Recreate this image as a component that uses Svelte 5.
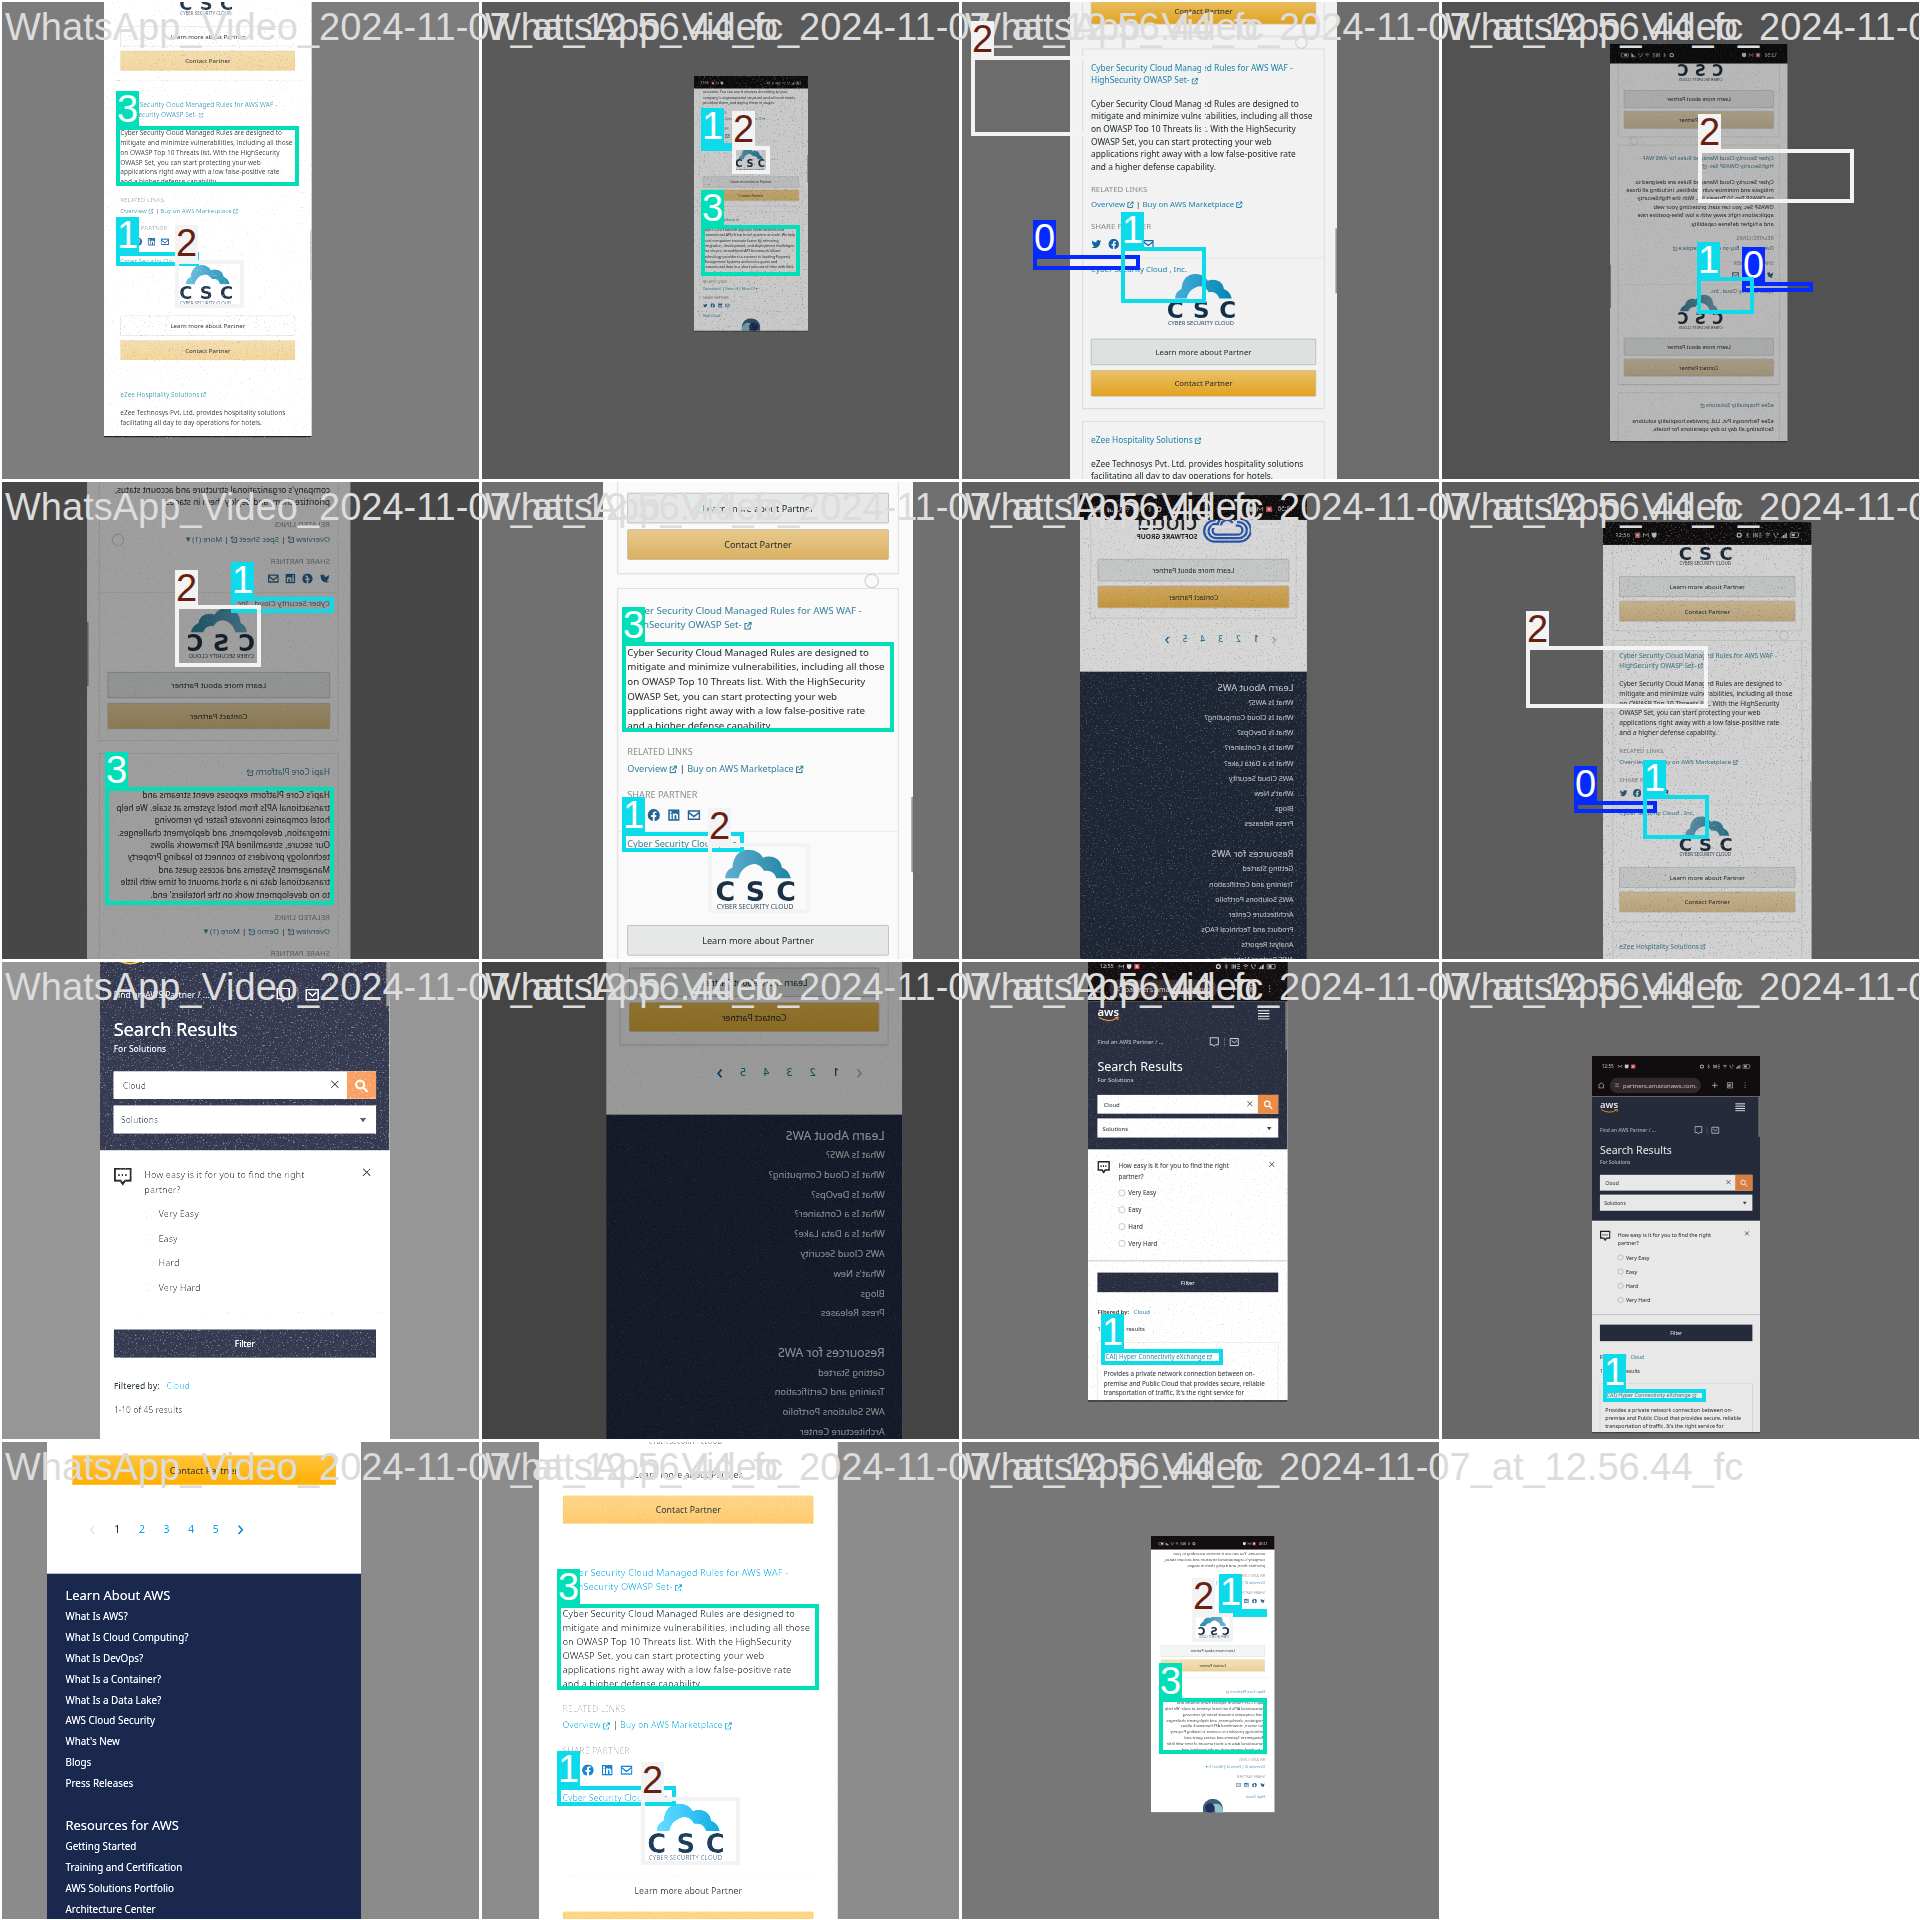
<script lang="ts">
  type Box = { cls: number; x: number; y: number; w: number; h: number };
  type Frame = {
    page: string;
    x: number;
    y: number;
    k: number;
    flip?: boolean;
    quiet?: boolean;
    light: number;
    sat: number;
    grain: number;
    tones?: string;
    boxes: Box[];
  };

  const caption = 'WhatsApp_Video_2024-11-07_at_12.56.44_fc';
  const PAGE_W = 510;
  const PAGE_H = 1144;

  const box = (cls: number, x: number, y: number, w: number, h: number): Box => ({ cls, x, y, w, h });

  const frames: Frame[] = [
    { page: 'waf', x: 104, y: -28, k: 0.407, light: 1.1, sat: 0.75, grain: 0.3, tones: '--gold: #e4c88e; --amber: #e6c27a', boxes: [box(3, 116, 126, 183, 60), box(1, 116, 252, 83, 14), box(2, 175, 260, 69, 48)] },
    { page: 'hapi', x: 214, y: 76, k: 0.2235, light: 0.79, sat: 0.8, grain: 0.35, tones: '--gold: #f8cc76; --amber: #f2c468', boxes: [box(1, 221, 143, 35, 8), box(2, 252, 146, 38, 28), box(3, 221, 225, 99, 51)] },
    { page: 'waf', x: 110, y: -103, k: 0.5235, light: 0.95, sat: 1.1, grain: 0, boxes: [box(2, 11, 56, 234, 80), box(0, 73, 255, 107, 15), box(1, 161, 247, 85, 56)] },
    { page: 'waf', x: 170, y: 44, k: 0.3484, flip: true, light: 0.72, sat: 0.5, grain: 0.15, tones: '--gold: #f3d694; --amber: #e8c884', boxes: [box(2, 258, 149, 156, 54), box(0, 302, 282, 71, 10), box(1, 257, 277, 57, 37)] },
    { page: 'hapi', x: 87, y: -40, k: 0.517, flip: true, light: 0.62, sat: 0.7, grain: 0.15, tones: '--gold: #f8d690; --amber: #ecc268', boxes: [box(1, 231, 117, 103, 16), box(2, 175, 125, 86, 62), box(3, 105, 307, 229, 118)] },
    { page: 'waf', x: 123, y: -68, k: 0.608, light: 0.98, sat: 0.8, grain: 0, tones: '--gold: #f4cd80; --amber: #e9b34e', boxes: [box(3, 142, 162, 272, 90), box(1, 142, 352, 122, 20), box(2, 228, 363, 102, 70)] },
    { page: 'footer', x: 120, y: 15, k: 0.445, flip: true, light: 0.84, sat: 1, grain: 0.3, tones: '--gold: #f3c670; --amber: #eab044; --deep: #242c3e', boxes: [] },
    { page: 'waf', x: 163, y: 42, k: 0.409, light: 0.82, sat: 0.65, grain: 0.35, tones: '--gold: #fad694; --amber: #f0c478', boxes: [box(2, 86, 166, 182, 62), box(0, 134, 321, 83, 12), box(1, 203, 315, 66, 44)] },
    { page: 'search', x: 100, y: -93, k: 0.568, light: 1.32, sat: 1, grain: 0.3, tones: '--orange: #bd794a; --navy: #292c3d', boxes: [] },
    { page: 'footer', x: 126, y: -76, k: 0.581, flip: true, light: 0.6, sat: 1, grain: 0.12, tones: '--gold: #ecc050; --amber: #e8b038', boxes: [] },
    { page: 'search', x: 128, y: -6, k: 0.3914, light: 1, sat: 1, grain: 0.15, boxes: [box(1, 141, 389, 122, 16)] },
    { page: 'search', x: 152, y: 96, k: 0.33, light: 0.91, sat: 1, grain: 0, boxes: [box(1, 163, 429, 103, 13)] },
    { page: 'footer', x: 47, y: -111, k: 0.616, light: 1.22, sat: 1, grain: 0, tones: '--gold: #d1a232; --amber: #d18f00; --deep: #16213f; --link: #0f82c4', boxes: [] },
    { page: 'waf', x: 59, y: -58, k: 0.5853, quiet: true, light: 1.23, sat: 1, grain: 0.12, tones: '--gold: #cfae70; --amber: #cfa45a', boxes: [box(3, 77, 164, 262, 86), box(1, 77, 346, 119, 20), box(2, 161, 357, 99, 68)] },
    { page: 'hapi', x: 191, y: 96, k: 0.2425, flip: true, quiet: true, light: 1.04, sat: 0.7, grain: 0, tones: '--gold: #f2d898; --amber: #eac87c', boxes: [box(1, 259, 169, 48, 8), box(2, 232, 173, 41, 29), box(3, 199, 258, 108, 56)] }
  ];

  const wafTitle = ['Cyber Security Cloud Managed Rules for AWS WAF -', 'HighSecurity OWASP Set-'];
  const wafBody = [
    'Cyber Security Cloud Managed Rules are designed to',
    'mitigate and minimize vulnerabilities, including all those',
    'on OWASP Top 10 Threats list. With the HighSecurity',
    'OWASP Set, you can start protecting your web',
    'applications right away with a low false-positive rate',
    'and a higher defense capability.'
  ];
  const ezeeBody = ['eZee Technosys Pvt. Ltd. provides hospitality solutions', 'facilitating all day to day operations for hotels.'];
  const managerBody = [
    'accounts. You can use it services according to your',
    "company's organizational structure and account status,",
    'prioritize them, and deploy them in stages.'
  ];
  const hapiBody = [
    "Hapi's Core Platform exposes event streams and",
    'transactional APIs from hotel systems at scale. We help',
    'hotel companies innovate faster by removing',
    'integration, development, and deployment challenges.',
    'Our secure, streamlined API framework allows',
    'technology providers to connect to leading Property',
    'Management Systems and access guest and',
    'transactional data in a short amount of time with little',
    "to no development work on the hoteliers' end."
  ];
  const exchangeBody = [
    'Provides a private network connection between on-',
    'premise and Public Cloud that provides secure, reliable',
    "transportation of traffic. It's the right service for",
    'the AWS/Azure Cloud customers for digital infrastructure'
  ];
  const learn = ['What Is AWS?', 'What Is Cloud Computing?', 'What Is DevOps?', 'What Is a Container?', 'What Is a Data Lake?', 'AWS Cloud Security', "What's New", 'Blogs', 'Press Releases'];
  const resources = ['Getting Started', 'Training and Certification', 'AWS Solutions Portfolio', 'Architecture Center', 'Product and Technical FAQs', 'Analyst Reports', 'AWS Partner Network'];
  const ratings = ['Very Easy', 'Easy', 'Hard', 'Very Hard'];
</script>

{#snippet ext()}
  <svg class="ext" viewBox="0 0 14 14" aria-hidden="true"><path d="M11 8v5H1.500V3H6M8 1.500h4.500V6M12.500 1.500 5.500 8.500" /></svg>
{/snippet}

{#snippet lines(text: string[])}
  <p class="copy">{#each text as line}<span>{line}</span>{/each}</p>
{/snippet}

{#snippet share()}
  <h4>SHARE PARTNER</h4>
  <div class="social">
    <a href="#twitter" aria-label="Twitter"><svg viewBox="0 0 24 24"><path d="M23 5a9 9 0 0 1-2.600.7 4.500 4.500 0 0 0 2-2.500 9 9 0 0 1-2.900 1.100A4.600 4.600 0 0 0 11.700 8.500 13 13 0 0 1 2.200 3.700a4.600 4.600 0 0 0 1.400 6.100 4.500 4.500 0 0 1-2-.6 4.600 4.600 0 0 0 3.600 4.500 4.600 4.600 0 0 1-2 .1 4.600 4.600 0 0 0 4.300 3.200A9.200 9.200 0 0 1 .7 19 13 13 0 0 0 20.700 7.400 9 9 0 0 0 23 5z" /></svg></a>
    <a href="#facebook" aria-label="Facebook"><svg viewBox="0 0 24 24"><path d="M24 12a12 12 0 1 0-13.900 11.900v-8.400H7V12h3.100V9.400c0-3 1.800-4.700 4.500-4.700 1.300 0 2.700.2 2.700.2v3h-1.500c-1.500 0-2 .9-2 1.900V12h3.400l-.5 3.500h-2.900v8.400A12 12 0 0 0 24 12z" /></svg></a>
    <a href="#linkedin" aria-label="LinkedIn"><svg viewBox="0 0 24 24"><path fill-rule="evenodd" d="M1 1h22v22H1zM4 9v11h3.500V9zM5.700 4a2 2 0 1 0 0 4 2 2 0 0 0 0-4zM10 9v11h3.500v-6c0-3 3.500-3 3.500 0v6h3.300v-7c0-5-5-5.500-6.800-2.500V9z" /></svg></a>
    <a href="#mail" aria-label="Email"><svg viewBox="0 0 24 24"><path class="line" d="M1 4h22v16H1zM2 7l10 8L22 7" /></svg></a>
  </div>
{/snippet}

{#snippet cscLogo()}
  <svg class="csc" viewBox="0 0 136 98" role="img" aria-label="Cyber Security Cloud">
    <path fill="url(#cloud)" d="M14 47C14 38 19 32 26 29 27 10 38 0 52 0c11 0 20 5 24 13 15-6 30 2 31 16 8 3 13 9 15 18H98C96 38 88 33 78 35 73 26 64 21 55 25 44 29 38 37 36 47z" />
    <text class="letters" x="-2 48 98" y="84">CSC</text>
    <text class="tiny" x="0" y="97">CYBER SECURITY CLOUD</text>
  </svg>
{/snippet}

{#snippet actions()}
  <div class="actions">
    <button class="learn">Learn more about Partner</button>
    <button class="contact">Contact Partner</button>
  </div>
{/snippet}

{#snippet cscPartner()}
  <div class="partner">
    <a href="#csc">Cyber Security Cloud , Inc.</a>
    {@render cscLogo()}
    {@render actions()}
  </div>
{/snippet}

{#snippet statusBar(late: boolean)}
  <div class="status">
    <span>{late ? '12:55' : '12:56'}</span>
    <svg class:last={late} viewBox="0 0 14 14"><rect width="14" height="14" rx="3" fill="#e0505a" /><rect x="4" y="4" width="6" height="6" fill="#f6c9cb" /></svg>
    <svg viewBox="0 0 14 14"><path fill="none" stroke="#cfcfcf" stroke-width="2" d="M1 12V3l6 5 6-5v9" /></svg>
    <svg viewBox="0 0 14 14"><path fill="#dcdcdc" d="M1 1h12v6q0 5-6 7-6-2-6-7z" /></svg>
    <i></i>
    <svg viewBox="0 0 14 14"><circle cx="7" cy="7" r="5" fill="none" stroke="#dcdcdc" stroke-width="3" /></svg>
    <svg viewBox="0 0 14 14"><path fill="none" stroke="#bdbdbd" stroke-width="1.500" d="M4 4l6 6-3 3V1l3 3-6 6" /></svg>
    <svg class="wide" viewBox="0 0 24 14"><path fill="none" stroke="#bdbdbd" stroke-width="2" d="M2 1v12M6 13V2l5 10V1M15 2h7M15 7h7M15 12h7" /></svg>
    <svg viewBox="0 0 14 14"><path fill="none" stroke="#cfcfcf" stroke-width="2" d="M1 5q6-5 12 0M4 8q3-3 6 0M7 11v2" /></svg>
    <svg viewBox="0 0 14 14"><path fill="none" stroke="#cfcfcf" stroke-width="2" d="M2 1v4q1 7 8 8M9 1l4 3-4 3" /></svg>
    <svg viewBox="0 0 14 14"><path fill="#cfcfcf" d="M0 10h3v4H0zM4 7h3v7H4zM8 4h3v10H8zM12 1h2v13h-2z" /></svg>
    <svg class="wide" viewBox="0 0 24 14"><rect x="1" y="1" width="21" height="12" rx="3" fill="none" stroke="#cfcfcf" stroke-width="2" /><path fill="#cfcfcf" d="M5 4h8v6H5z" /></svg>
  </div>
{/snippet}

{#snippet waf(quiet: boolean)}
  {@render statusBar(false)}
  <div class="view">
    <div class="scroll csc-tail">
      <section class="card tail">{@render cscLogo()}{@render actions()}</section>
      <section class="card">
        <h3><a href="#waf">{#each wafTitle as line, i}<span>{line}{#if i === 1}&nbsp;{@render ext()}{/if}</span>{/each}</a></h3>
        {@render lines(wafBody)}
        <h4>RELATED LINKS</h4>
        <p class="links"><a href="#overview">Overview {@render ext()}</a> | <a href="#market">Buy on AWS Marketplace {@render ext()}</a></p>
        {@render share()}
        {@render cscPartner()}
      </section>
      <section class="card">
        <h3><a href="#ezee">eZee Hospitality Solutions {@render ext()}</a></h3>
        {@render lines(ezeeBody)}
      </section>
    </div>
    {#if !quiet}
      <div class="ring low"></div>
      <div class="thumb"></div>
    {/if}
  </div>
{/snippet}

{#snippet hapi(quiet: boolean)}
  {@render statusBar(false)}
  <div class="view">
    <div class="scroll">
      <section class="card tail manager">
        {@render lines(managerBody)}
        <h4>RELATED LINKS</h4>
        <p class="links"><a href="#overview">Overview {@render ext()}</a> | <a href="#spec">Spec Sheet {@render ext()}</a> | <a href="#more">More (1)▼</a></p>
        {@render share()}
        {@render cscPartner()}
      </section>
      <section class="card">
        <h3><a href="#hapi">Hapi Core Platform {@render ext()}</a></h3>
        {@render lines(hapiBody)}
        <h4>RELATED LINKS</h4>
        <p class="links"><a href="#overview">Overview {@render ext()}</a> | <a href="#demo">Demo {@render ext()}</a> | <a href="#more">More (1)▼</a></p>
        {@render share()}
        <div class="partner">
          <a href="#hapicloud">Hapi Cloud</a>
          <svg class="dome" viewBox="0 0 84 84" role="img" aria-label="Hapi Cloud"><circle cx="42" cy="42" r="42" fill="#2f5f86" /><path d="M0 44Q10 14 42 22L30 60H0z" fill="#7fc0cc" /><circle cx="54" cy="38" r="20" fill="#1d2c6b" /></svg>
        </div>
      </section>
    </div>
    {#if !quiet}
      <div class="ring high"></div>
      <div class="thumb early"></div>
    {/if}
  </div>
{/snippet}

{#snippet footer()}
  {@render statusBar(false)}
  <div class="view">
    <div class="scroll">
      <section class="card tail cloud-card">
        <div class="cloud-logo">
          <svg viewBox="0 0 108 78" aria-hidden="true"><g fill="none" stroke="#2c62c8" stroke-width="5"><path d="M31 23H26a24 24 0 0 0 0 52H80a24 24 0 0 0 2-48 30 30 0 0 0-56-4" /><path d="M31 31H27a16 16 0 0 0 0 36H79a16 16 0 0 0 0-32H74a22 22 0 0 0-40-8" /><path d="M34 39H29a9 9 0 0 0 0 20H77a9 9 0 0 0 0-18H67a14 14 0 0 0-26-8" /></g></svg>
          <div><b>cloud</b><small>SOFTWARE GROUP</small></div>
        </div>
        {@render actions()}
      </section>
      <nav class="pager">
        <a class="off" href="#prev" aria-label="Previous"><svg viewBox="0 0 14 20"><path d="M10 3 4 10l6 7" /></svg></a>
        <b>1</b>{#each [2, 3, 4, 5] as n}<a href="#page">{n}</a>{/each}
        <a href="#next" aria-label="Next"><svg viewBox="0 0 14 20"><path d="m4 3 6 7-6 7" /></svg></a>
      </nav>
      <footer>
        <h2>Learn About AWS</h2>
        <ul>{#each learn as item}<li><a href="#learn">{item}</a></li>{/each}</ul>
        <h2>Resources for AWS</h2>
        <ul>{#each resources as item}<li><a href="#resources">{item}</a></li>{/each}</ul>
      </footer>
    </div>
  </div>
{/snippet}

{#snippet search(id: number)}
  <div class="chrome">
    {@render statusBar(true)}
    <div class="urlbar">
      <svg viewBox="0 0 20 20"><path d="M3 8l7-6 7 6v10H3z" /></svg>
      <span class="pill"><svg viewBox="0 0 20 20"><path d="M2 5h5M11 5h7M2 14h9M15 14h3M9 2v6M13 11v6" /></svg>partners.amazonaws.com,</span>
      <svg viewBox="0 0 20 20"><path d="M10 1v18M1 10h18" /></svg>
      <svg viewBox="0 0 20 20"><path d="M2 2h16v16H2zM6 7h3v7H6zM12 6v8" /></svg>
      <svg viewBox="0 0 20 20"><path d="M10 1v3M10 8v3M10 15v3" /></svg>
    </div>
  </div>
  <div class="view">
    <header>
      <div class="top">
        <div class="aws"><b>aws</b><svg viewBox="0 0 60 14" aria-hidden="true"><path d="M4 2q24 15 46 2M45 2l8-1-1 8" /></svg></div>
        <button class="burger" aria-label="Menu"><svg viewBox="0 0 30 26"><path d="M0 3h30M0 10h30M0 17h30M0 24h30" /></svg></button>
      </div>
      <div class="crumb">
        <span>Find an AWS Partner / ...</span>
        <svg viewBox="0 0 26 26"><path d="M2 2h21v18h-7l-4 4-3-4H2z" /></svg>
        <i></i>
        <svg viewBox="0 0 26 26"><path d="M2 4h21v18H2zM6 9l7 6 7-6" /></svg>
      </div>
      <h1>Search Results</h1>
      <p>For Solutions</p>
      <form class="find">
        <input aria-label="Search" value="Cloud" />
        <button type="button" class="clear" aria-label="Clear"><svg viewBox="0 0 14 14"><path d="M1 1l12 12M13 1 1 13" /></svg></button>
        <button type="button" class="go" aria-label="Search"><svg viewBox="0 0 24 24"><circle cx="10" cy="10" r="7" /><path d="m15 15 8 8" /></svg></button>
      </form>
      <div class="pick"><select aria-label="Category"><option>Solutions</option></select></div>
    </header>
    <section class="survey">
      <svg class="talk" viewBox="0 0 32 32"><path d="M2 2h28v21H20l-4 6-4-6H2z" /><path d="M8 13h3M14 13h3M20 13h3" /></svg>
      <div>
        <p>How easy is it for you to find the right<br />partner?</p>
        {#each ratings as rating}<label><input type="radio" name="rating-{id}" />{rating}</label>{/each}
      </div>
      <button class="clear" aria-label="Close"><svg viewBox="0 0 14 14"><path d="M1 1l12 12M13 1 1 13" /></svg></button>
    </section>
    <section class="results">
      <button class="filter">Filter</button>
      <p class="by"><b>Filtered by:</b> <a href="#cloud">Cloud</a></p>
      <p class="count">1-10 of 45 results</p>
    </section>
    <section class="card">
      <h3><a href="#hcx">(CAI) Hyper Connectivity eXchange {@render ext()}</a></h3>
      {@render lines(exchangeBody)}
    </section>
    <div class="thumb top-thumb"></div>
  </div>
{/snippet}

<svg class="defs" aria-hidden="true">
  <defs>
    <linearGradient id="cloud"><stop offset="0" stop-color="#52b4de" /><stop offset="1" stop-color="#0b8cb4" /></linearGradient>
    <filter id="dark-specks" x="0" y="0" width="100%" height="100%"><feTurbulence type="fractalNoise" baseFrequency="0.600" numOctaves="2" seed="4" /><feColorMatrix values="0 0 0 0 .2  0 0 0 0 .2  0 0 0 0 .25  9 0 0 0 -5.800" /></filter>
    <filter id="light-specks" x="0" y="0" width="100%" height="100%"><feTurbulence type="fractalNoise" baseFrequency="0.600" numOctaves="2" seed="9" /><feColorMatrix values="0 0 0 0 .7  0 0 0 0 .8  0 0 0 0 .8  0 9 0 0 -5.800" /></filter>
  </defs>
</svg>

<main>
  {#each frames as f, i}
    <figure>
      <div class="photo" style="filter: brightness({f.light}) saturate({f.sat}); {f.tones ?? ''}">
        <div class="phone" class:flip={f.flip} style="left: {f.x}px; top: {f.y}px; width: {PAGE_W * f.k}px; height: {PAGE_H * f.k}px">
          <div class="page" style="transform: scale({f.k})">
            {#if f.page === 'waf'}{@render waf(!!f.quiet)}{:else if f.page === 'hapi'}{@render hapi(!!f.quiet)}{:else if f.page === 'footer'}{@render footer()}{:else}{@render search(i)}{/if}
          </div>
          {#if f.grain}
            <svg class="grain" style="opacity: {f.grain}" aria-hidden="true"><rect width="100%" height="100%" filter="url(#dark-specks)" /><rect width="100%" height="100%" filter="url(#light-specks)" /></svg>
          {/if}
        </div>
      </div>
      <figcaption>{caption}</figcaption>
      <div class="marks">
        {#each f.boxes as b}
          <div class="mark c{b.cls}" style="left: {b.x}px; top: {b.y}px; width: {b.w}px; height: {b.h}px"><span>{b.cls}</span></div>
        {/each}
      </div>
    </figure>
  {/each}
</main>

<style>
  :global(body) { margin: 0; background: #fff; }
  main { display: grid; grid-template-columns: repeat(4, 1fr); overflow: hidden; font-family: "Noto Sans", "Open Sans", sans-serif; }
  figure { position: relative; margin: 0; aspect-ratio: 1; box-sizing: border-box; padding: 2px 1px 1px 2px; }
  .defs { position: absolute; width: 0; height: 0; }
  .photo { --gold: #f3cb75; --amber: #e8ab2f; --deep: #232c42; --navy: #292f41; --orange: #ec8b46; --link: #2587ab; position: relative; height: 100%; margin: 0; overflow: hidden; background: #727272; }
  .phone { position: absolute; overflow: hidden; margin: -2px 0 0 -2px; }
  .flip { transform: scaleX(-1); }
  .grain { position: absolute; inset: 0; width: 100%; height: 100%; }
  figcaption { position: absolute; z-index: 2; left: 5px; top: 5px; color: #dcdcdc; font: 38px/44px "Liberation Sans", Arial, sans-serif; white-space: nowrap; pointer-events: none; }
  .marks { position: absolute; z-index: 3; inset: 0; pointer-events: none; }
  .mark { position: absolute; box-sizing: border-box; border: 4px solid var(--c); }
  .mark span { position: absolute; left: -4px; bottom: 100%; margin-bottom: 4px; width: 23px; height: 35px; background: var(--c); color: var(--t); font: 38px/37px "Liberation Sans", Arial, sans-serif; text-indent: 1px; }
  .c0 { --c: #042aff; --t: #fff; }
  .c1 { --c: #0bdbeb; --t: #fff; }
  .c2 { --c: #f3f3f3; --t: #681f11; }
  .c3 { --c: #00dfb7; --t: #fff; }

  /* one handset page, laid out at its own size and shown at the frame's scale */
  .page { display: flex; flex-direction: column; width: 510px; height: 1144px; box-sizing: border-box; border-bottom: 4px solid #1c1c1c; transform-origin: 0 0; background: #fff; color: #222b2e; font-size: 15px; line-height: 24px; }
  .view { position: relative; flex: 1; min-height: 0; overflow: hidden; }
  .csc-tail { margin-top: -47px; }
  .status { display: flex; align-items: center; gap: 6px; height: 56px; padding: 8px 30px 0; box-sizing: border-box; background: #130e10; color: #d6d6d6; font-size: 14px; }
  .status span { margin-right: 6px; }
  .status i { flex: 1; order: 2; }
  .status i ~ svg { order: 3; }
  .status svg { width: 14px; height: 14px; }
  .status .last { order: 1; }
  .status .wide { width: 24px; }

  a { color: var(--link); text-decoration: none; }
  button { font: inherit; color: inherit; cursor: pointer; }
  h1, h2, h3, h4, p, ul { margin: 0; padding: 0; font-weight: 400; font-size: inherit; }
  .card { margin: 24px 24px 0; padding: 23px 15px 22px; border: 1px solid #d5d9d9; box-shadow: 0 1px 3px #0002; }
  .card.tail { margin-top: 0; border-top: 0; padding-top: 10px; }
  .csc-tail .tail { padding-top: 0; }
  .manager.tail { padding-top: 4px; }
  h3, .copy { font-size: 16px; white-space: nowrap; }
  h3 span, .copy span { display: block; }
  h3 + .copy { margin-top: 21px; }
  .ext { width: 13px; height: 13px; vertical-align: -2px; }
  .ext path { fill: none; stroke: var(--link); stroke-width: 2; }
  h4 { margin-top: 19px; color: #8d9292; }
  .links { margin-top: 4px; white-space: nowrap; }
  .social { display: flex; gap: 12px; margin-top: 12px; }
  .social a { display: block; height: 20px; }
  .social svg { width: 21px; height: 20px; fill: #1769a8; }
  .social .line { fill: none; stroke: #1769a8; stroke-width: 3; }
  .partner { display: flex; flex-direction: column; margin: 16px -15px 0; padding: 8px 15px 0; border-top: 1px solid #e2e4e4; }
  .csc { display: block; width: 136px; height: 98px; margin: 0 auto; overflow: visible; }
  .partner .csc { margin-top: -2px; }
  .letters { font: bold 44px "DejaVu Sans", sans-serif; fill: #16324c; }
  .tiny { font: 11px "Noto Sans", sans-serif; fill: #33475a; }
  .dome { width: 84px; height: 84px; margin: -2px auto 0; }
  .actions { display: grid; gap: 10px; margin-top: 26px; }
  .actions button { height: 50px; padding: 0; border: 1px solid #a2a6a6; border-radius: 2px; background: #eaeded; color: #222b2e; }
  .actions .contact { border-color: #b9985a; background: linear-gradient(var(--gold), var(--amber)); }
  .ring { position: absolute; width: 20px; height: 20px; border: 2px solid #d4d8dc; border-radius: 50%; }
  .ring.low { left: 430px; top: 210px; }
  .ring.high { left: 438px; top: 125px; }
  .thumb { position: absolute; right: 0; top: 577px; width: 3px; height: 124px; background: #9a9c9e; }
  .thumb.early { top: 296px; }
  .top-thumb { top: 0; width: 6px; height: 123px; background: #777; }

  .cloud-logo { display: flex; align-items: flex-end; gap: 12px; margin: -36px 0 0 86px; }
  .cloud-logo svg { width: 108px; height: 78px; }
  .cloud-logo div { display: flex; flex-direction: column; padding-bottom: 6px; color: #2a2a2a; }
  .cloud-logo b { font-size: 52px; line-height: 48px; font-weight: 500; }
  .cloud-logo small { font-size: 15px; line-height: 20px; font-weight: 700; }
  .cloud-card .actions { margin-top: 36px; }
  .pager { display: flex; margin: 35px 0 61px 54px; font-size: 18px; }
  .pager a, .pager b { width: 40px; text-align: center; font-weight: 500; }
  .pager svg { width: 14px; height: 20px; vertical-align: -5px; }
  .pager path { fill: none; stroke: #0b6fb0; stroke-width: 3; }
  .pager .off path { stroke: #bbb; }
  footer { height: 760px; padding: 18px 30px; background: var(--deep); color: #eceff4; }
  footer a { color: #eceff4; }
  footer h2 { font-size: 21px; line-height: 34px; }
  footer li { height: 34px; font-size: 16px; line-height: 34px; list-style: none; }
  footer ul + h2 { margin-top: 34px; }

  .chrome { height: 122px; background: #130e10; }
  .urlbar { display: flex; align-items: center; gap: 26px; padding: 10px 18px 0; }
  .urlbar svg { flex: none; width: 20px; height: 20px; fill: none; stroke: #e6e0e0; stroke-width: 2; }
  .pill { display: flex; align-items: center; gap: 10px; width: 276px; height: 46px; margin: 0 6px 0 -10px; padding-left: 14px; box-sizing: border-box; border-radius: 23px; background: #382d30; color: #ddd4d6; font-size: 18px; }
  .pill svg { width: 16px; height: 16px; }
  header { padding: 14px 24px 30px; background: var(--navy); color: #fff; }
  .top { display: flex; justify-content: space-between; height: 37px; align-items: center; }
  .aws { display: flex; flex-direction: column; width: 60px; }
  .aws b { font-size: 29px; line-height: 24px; font-weight: 600; }
  .aws svg { height: 14px; fill: none; stroke: #f0972c; stroke-width: 3; }
  .burger { border: 0; background: none; padding: 0; height: 26px; margin-right: 22px; }
  .burger svg { width: 30px; height: 26px; stroke: #fff; stroke-width: 3; }
  .crumb { display: flex; align-items: center; gap: 12px; height: 24px; margin-top: 40px; color: #c6c9d2; }
  .crumb span { width: 274px; }
  .crumb i { width: 1px; height: 24px; background: #8c90a0; }
  .crumb svg { width: 26px; height: 26px; fill: none; stroke: #fff; stroke-width: 2; }
  h1 { margin-top: 29px; font-size: 32px; line-height: 40px; }
  header p { margin-top: 2px; color: #d6d8de; }
  .find { display: flex; height: 48px; margin-top: 28px; background: #fff; }
  .find input { flex: 1; min-width: 0; border: 0; padding: 0 16px; font: inherit; background: none; color: #222b2e; }
  .clear { border: 0; background: none; padding: 0; width: 34px; }
  .clear svg { width: 15px; height: 15px; stroke: #333; stroke-width: 2; }
  .find .clear { margin-right: 4px; }
  .go { width: 52px; border: 0; background: var(--orange); padding: 0; }
  .go svg { width: 24px; height: 24px; fill: none; stroke: #fff; stroke-width: 3; vertical-align: middle; }
  .pick { display: flex; align-items: center; height: 49px; margin-top: 12px; background: #fff; color: #333; }
  .pick select { flex: 1; height: 100%; border: 0; padding: 0 13px; appearance: none; background: none; font: inherit; color: #222b2e; }
  .pick::after { content: ""; margin: 3px 17px 0 0; border: 6px solid transparent; border-top: 8px solid #444; border-bottom: 0; }
  .survey { display: flex; align-items: flex-start; gap: 22px; padding: 30px 24px 22px 24px; border-bottom: 2px solid #b9bcbf; font-size: 16px; line-height: 26px; }
  .survey div { flex: 1; }
  .talk { width: 32px; height: 32px; fill: none; stroke: #222; stroke-width: 4; }
  .survey label { display: flex; align-items: center; gap: 8px; height: 43px; }
  .survey p { margin-bottom: 8px; }
  .survey input { appearance: none; width: 17px; height: 17px; margin: 0; border: 1px solid #777; border-radius: 50%; }
  .survey .clear { height: 18px; line-height: 15px; }
  .results { padding: 29px 24px 0; }
  .filter { width: 100%; height: 50px; border: 0; background: var(--navy); color: #fff; }
  .by { margin-top: 37px; }
  .by b { font-weight: 600; margin-right: 8px; }
  .count { margin-top: 19px; }
</style>
